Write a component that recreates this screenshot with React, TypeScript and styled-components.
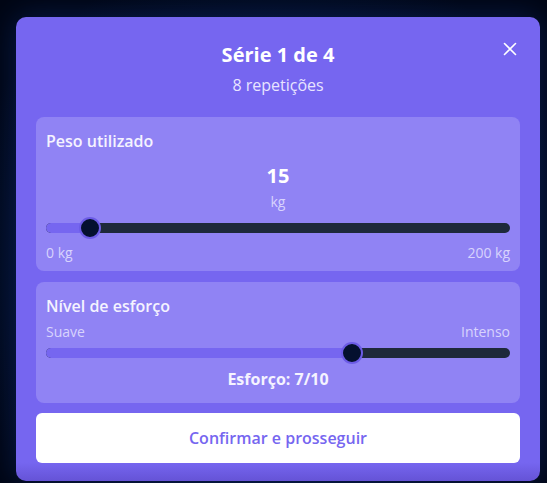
import React from "react";
import styled, { createGlobalStyle } from "styled-components";

const GlobalStyle = createGlobalStyle`
  html, body {
    margin: 0;
    padding: 0;
    background: #010614;
    font-family: "Open Sans", "Noto Sans", sans-serif;
  }
  * { box-sizing: border-box; }
`;

const THUMB = 22;

interface ISliderProps {
  value: number;
  min: number;
  max: number;
}

const Slider: React.FC<ISliderProps> = ({ value, min, max }) => {
  const ratio = (value - min) / (max - min);
  const center = `calc(${THUMB / 2}px + ${ratio} * (100% - ${THUMB}px))`;

  return (
    <SliderRow>
      <Track>
        <Fill style={{ width: center }} />
      </Track>
      <Thumb style={{ left: `calc(${center} - ${THUMB / 2}px)` }} />
    </SliderRow>
  );
};

const CloseIcon = () => (
  <svg width="14" height="14" viewBox="0 0 14 14" fill="none">
    <path d="M1.5 1.5l11 11M12.5 1.5l-11 11" stroke="#fff" strokeWidth="1.6" strokeLinecap="round" />
  </svg>
);

export default function App() {
  return (
    <>
      <GlobalStyle />
      <Page>
        <Modal>
          <Close aria-label="Fechar">
            <CloseIcon />
          </Close>
          <Header>
            <Title>Série 1 de 4</Title>
            <Subtitle>8 repetições</Subtitle>
          </Header>

          <Card>
            <CardLabel>Peso utilizado</CardLabel>
            <BigValue>15</BigValue>
            <Unit>kg</Unit>
            <Slider value={15} min={0} max={200} />
            <Scale>
              <span>0 kg</span>
              <span>200 kg</span>
            </Scale>
          </Card>

          <Card $tight>
            <CardLabel>Nível de esforço</CardLabel>
            <Scale $top>
              <span>Suave</span>
              <span>Intenso</span>
            </Scale>
            <Slider value={7} min={1} max={10} />
            <Effort>Esforço: 7/10</Effort>
          </Card>

          <ConfirmButton>Confirmar e prosseguir</ConfirmButton>
        </Modal>
      </Page>
    </>
  );
}

const Page = styled.div`
  width: 547px;
  height: 483px;
  padding: 17px 7px 0 16px;
  overflow: hidden;
  background: radial-gradient(ellipse at 50% 55%, #0a1a45 0%, #03102c 55%, #010614 85%);
`;

const Modal = styled.div`
  position: relative;
  width: 524px;
  height: 464px;
  padding: 24px 20px 0;
  border-radius: 10px;
  background: linear-gradient(to bottom, #7666f0 0%, #7666f0 96%, #6553d6 100%);
  box-shadow: 0 0 30px rgba(20, 50, 140, 0.45);
  display: flex;
  flex-direction: column;
`;

const Close = styled.button`
  position: absolute;
  top: 23px;
  right: 21px;
  width: 18px;
  height: 18px;
  padding: 0;
  border: none;
  background: none;
  display: flex;
  align-items: center;
  justify-content: center;
  cursor: pointer;
`;

const Header = styled.div`
  display: flex;
  flex-direction: column;
  align-items: center;
  margin-bottom: 20px;
`;

const Title = styled.h2`
  margin: 0;
  font-size: 20px;
  line-height: 28px;
  font-weight: 700;
  color: #ffffff;
`;

const Subtitle = styled.p`
  margin: 4px 0 0;
  font-size: 16px;
  line-height: 24px;
  color: #e8e4ff;
`;

const Card = styled.div<{ $tight?: boolean }>`
  display: flex;
  flex-direction: column;
  padding: 12px 10px ${(p) => (p.$tight ? "12px" : "8px")};
  margin-bottom: ${(p) => (p.$tight ? "10px" : "11px")};
  border-radius: 8px;
  background: #9083f4;
`;

const CardLabel = styled.div`
  font-size: 16px;
  line-height: 24px;
  font-weight: 600;
  color: #f5f3ff;
`;

const BigValue = styled.div`
  margin-top: 9px;
  text-align: center;
  font-size: 20px;
  line-height: 28px;
  font-weight: 700;
  color: #ffffff;
`;

const Unit = styled.div`
  margin: 2px 0 5px;
  text-align: center;
  font-size: 14px;
  line-height: 20px;
  color: #d8d3fd;
`;

const SliderRow = styled.div`
  position: relative;
  height: ${THUMB}px;
  display: flex;
  align-items: center;
`;

const Track = styled.div`
  width: 100%;
  height: 10px;
  border-radius: 5px;
  background: #1e293b;
  overflow: hidden;
`;

const Fill = styled.div`
  height: 100%;
  background: #7666f0;
`;

const Thumb = styled.div`
  position: absolute;
  top: 0;
  width: ${THUMB}px;
  height: ${THUMB}px;
  border-radius: 50%;
  background: #04102f;
  border: 2px solid #6c5ce6;
`;

const Scale = styled.div<{ $top?: boolean }>`
  display: flex;
  justify-content: space-between;
  margin: ${(p) => (p.$top ? "5px 0 1px" : "4px 0 0")};
  font-size: 14px;
  line-height: ${(p) => (p.$top ? "18px" : "20px")};
  color: #d8d3fd;
`;

const Effort = styled.div`
  margin-top: 3px;
  text-align: center;
  font-size: 16px;
  line-height: 24px;
  font-weight: 700;
  color: #f5f3ff;
`;

const ConfirmButton = styled.button`
  height: 50px;
  width: 100%;
  border: none;
  border-radius: 6px;
  background: #ffffff;
  font-family: inherit;
  font-size: 16px;
  font-weight: 600;
  color: #7666f0;
  cursor: pointer;
`;
